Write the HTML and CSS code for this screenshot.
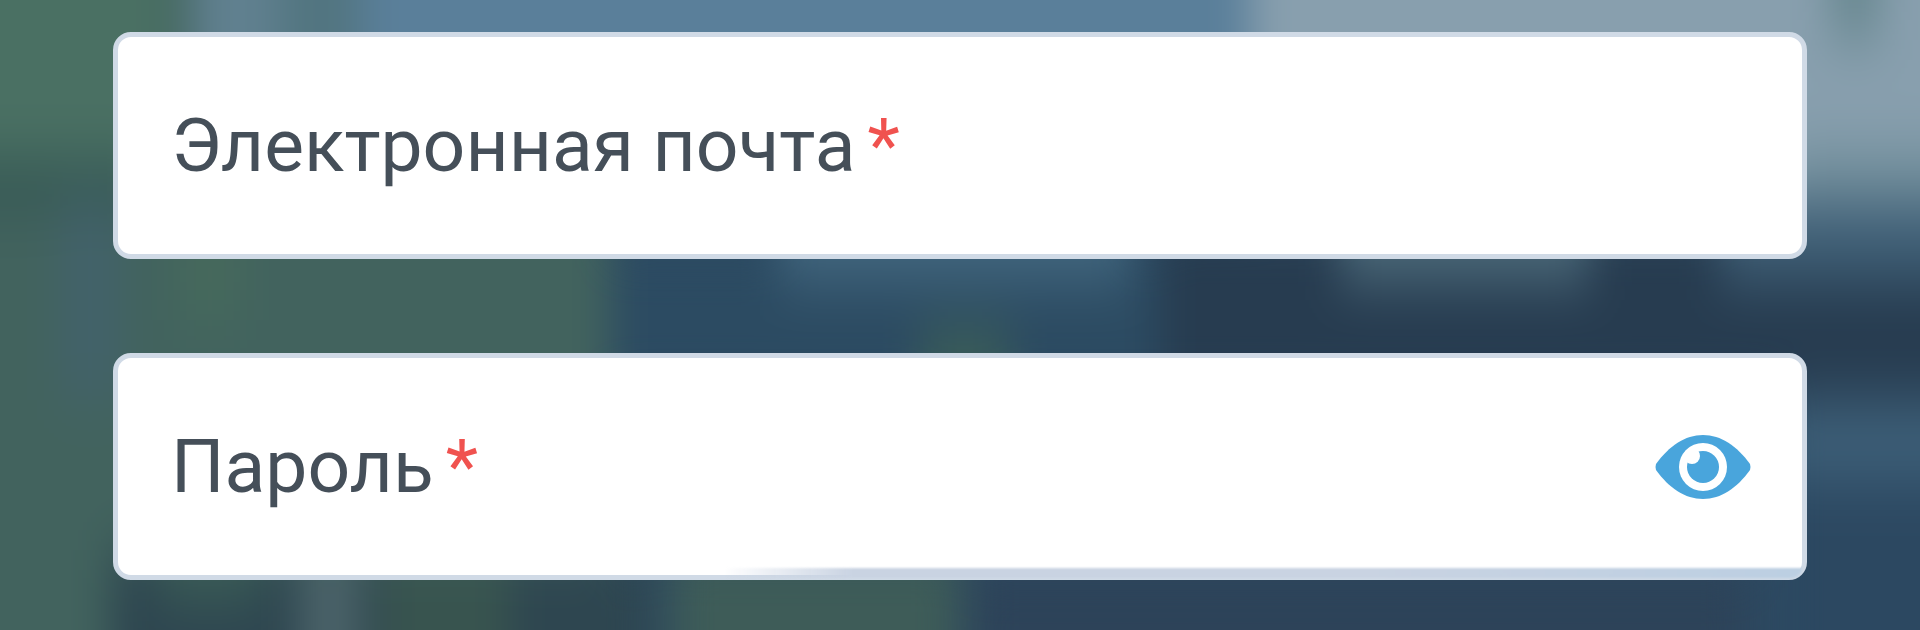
FILE: index.html
```html
<!DOCTYPE html>
<html lang="ru">
<head>
	<meta charset="UTF-8">
	<meta name="viewport" content="width=device-width, initial-scale=1.0">
	<title>Вход</title>
	<link rel="stylesheet" href="styles.css">
</head>
<body>
	<!-- blurred backdrop -->
	<svg class="backdrop" viewBox="0 0 1920 630" preserveAspectRatio="none" aria-hidden="true">
		<defs>
			<filter id="soft" x="-20%" y="-20%" width="140%" height="140%" color-interpolation-filters="sRGB">
				<feGaussianBlur stdDeviation="20 30"/>
			</filter>
		</defs>
		<rect width="1920" height="630" fill="#2d4a62"/>
		<g filter="url(#soft)">
			<rect x="-100" y="-100" width="710" height="800" fill="#42635e"/>
			<rect x="-100" y="-100" width="270" height="260" fill="#4a7063"/>
			<rect x="-100" y="160" width="240" height="50" fill="#365854"/>
			<rect x="60" y="200" width="60" height="200" fill="#42626a"/>
			<rect x="180" y="230" width="60" height="90" fill="#466a5c"/>
			<rect x="190" y="-100" width="90" height="240" fill="#60808f"/>
			<rect x="280" y="-100" width="80" height="240" fill="#527580"/>
			<rect x="360" y="-100" width="890" height="240" fill="#5a7f9a"/>
			<rect x="1250" y="-100" width="800" height="300" fill="#889fae"/>
			<rect x="1830" y="-80" width="50" height="120" fill="#67878f"/>
			<rect x="1790" y="150" width="300" height="40" fill="#6f8d99"/>
			<rect x="610" y="240" width="550" height="160" fill="#2c4b62"/>
			<rect x="780" y="180" width="350" height="100" fill="#42677f"/>
			<rect x="920" y="330" width="90" height="90" fill="#3b5e58"/>
			<rect x="1160" y="220" width="900" height="180" fill="#273c50"/>
			<rect x="1340" y="190" width="250" height="90" fill="#4c6a7a"/>
			<rect x="1720" y="200" width="320" height="80" fill="#3f5f76"/>
			<rect x="1780" y="400" width="300" height="80" fill="#3d5f78"/>
			<rect x="1780" y="480" width="300" height="250" fill="#2c4861"/>
			<rect x="110" y="550" width="540" height="260" fill="#2e4650"/>
			<rect x="160" y="540" width="100" height="60" fill="#3a5c56"/>
			<rect x="380" y="550" width="130" height="160" fill="#38544f"/>
			<rect x="300" y="550" width="60" height="260" fill="#4b6369"/>
			<rect x="670" y="540" width="290" height="260" fill="#3e5c58"/>
			<rect x="970" y="560" width="780" height="260" fill="#2d4359"/>
		</g>
	</svg>

	<form class="login">
		<div class="field">
			<input class="field-input" type="email" id="email" name="email" required>
			<label class="field-label" for="email">Электронная почта<span class="required">*</span></label>
		</div>
		<div class="field field-password">
			<input class="field-input" type="password" id="password" name="password" required>
			<label class="field-label" for="password">Пароль<span class="required">*</span></label>
			<button class="toggle" type="button" aria-label="Показать пароль">
				<svg class="eye" viewBox="0 0 96 66" aria-hidden="true">
					<path fill="#49a5dc" d="M1 30C14 12 30 1 48 1s34 11 47 29q1 3 0 6C82 54 66 65 48 65S14 54 1 36q-1-3 0-6z"/>
					<circle cx="48" cy="33" r="24" fill="#fff"/>
					<circle cx="48" cy="33" r="16" fill="#49a5dc"/>
					<circle cx="37" cy="22" r="8" fill="#fff"/>
				</svg>
			</button>
		</div>
	</form>

<script>
	var password = document.getElementById('password');
	var toggle = document.querySelector('.toggle');

	toggle.addEventListener('click', function() {
		password.type = password.type === 'password' ? 'text' : 'password';
	});
</script>
</body>
</html>
```
FILE: styles.css
```css
* {
	box-sizing: border-box;
}

body {
	font-family: Roboto, "Liberation Sans", sans-serif;
	margin: 0;
	min-height: 100vh;
	background-color: #2d4a62;
}

.backdrop {
	position: fixed;
	top: 0;
	left: 0;
	width: 100%;
	height: 100%;
	z-index: -1;
}

.login {
	display: flex;
	flex-direction: column;
	gap: 94px;
	padding: 32px 113px 48px;
}

.field {
	position: relative;
	display: grid;
	grid-template-columns: 1fr auto;
	align-items: center;
	background-color: #fff;
	border: 5px solid #d0dae6;
	border-radius: 18px;
}

/* soft shade along the bottom edge */
.field-password::after {
	content: "";
	position: absolute;
	right: 0;
	bottom: -3px;
	width: 64%;
	height: 10px;
	border-bottom-right-radius: 12px;
	background: linear-gradient(to right, transparent, #c9d3e2 12%, #c9d3e2 60%, #bccfe2);
	filter: blur(1px);
	pointer-events: none;
}

/* input and label share one cell */
.field-input,
.field-label {
	grid-row: 1;
	grid-column: 1;
	font-size: 75px;
	line-height: 90px;
}

.field-input {
	width: 100%;
	height: 217px;
	padding: 0 53px;
	font-family: inherit;
	color: #454f59;
	background: none;
	border: none;
	outline: none;
}

.field-label {
	padding: 0 53px 2px;
	color: #454f59;
	pointer-events: none;
}

.field-input:valid + .field-label {
	visibility: hidden;
}

.required {
	margin-left: 12px;
	color: #f0524f;
}

.toggle {
	display: flex;
	padding: 0;
	margin-right: 51px;
	background: none;
	border: none;
	cursor: pointer;
}

.eye {
	width: 96px;
	height: 66px;
}
```
